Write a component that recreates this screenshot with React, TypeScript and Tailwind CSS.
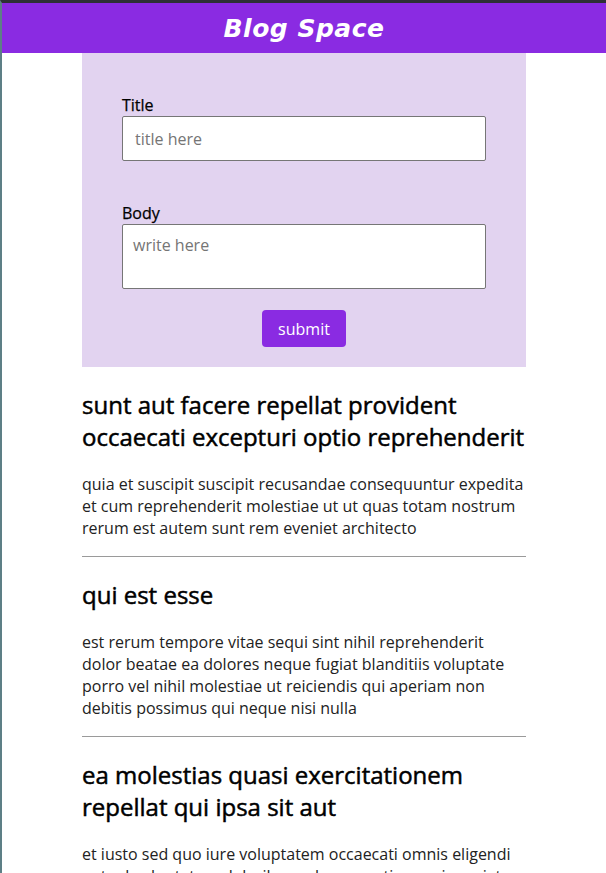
const posts = [
  {
    title: 'sunt aut facere repellat provident occaecati excepturi optio reprehenderit',
    body: 'quia et suscipit suscipit recusandae consequuntur expedita et cum reprehenderit molestiae ut ut quas totam nostrum rerum est autem sunt rem eveniet architecto',
  },
  {
    title: 'qui est esse',
    body: 'est rerum tempore vitae sequi sint nihil reprehenderit dolor beatae ea dolores neque fugiat blanditiis voluptate porro vel nihil molestiae ut reiciendis qui aperiam non debitis possimus qui neque nisi nulla',
  },
  {
    title: 'ea molestias quasi exercitationem repellat qui ipsa sit aut',
    body: 'et iusto sed quo iure voluptatem occaecati omnis eligendi aut ad voluptatem doloribus vel accusantium quis pariatur molestiae porro eius odio et labore et velit aut',
  },
];

export default function App() {
  return (
    <div className="min-h-[873px] bg-white border-t-[3px] border-l-2 border-t-[#2d3035] border-l-[#5d7f86] font-['Open_Sans',sans-serif] text-[#111]">
      {/* Header */}
      <header className="h-[50px] bg-[#8a2be2] flex items-center justify-center">
        <h1 className="text-white text-[25px] font-bold italic tracking-[0.5px] font-['DejaVu_Sans',sans-serif] mt-[1px]">
          Blog Space
        </h1>
      </header>

      <main className="w-[444px] mx-auto">
        {/* New post form */}
        <form className="bg-[#e2d3f0] px-10 pt-[41px] pb-5 flex flex-col" onSubmit={(e) => e.preventDefault()}>
          <label htmlFor="title" className="text-base leading-[22px] text-black [-webkit-text-stroke:0.25px_black]">Title</label>
          <input
            id="title"
            type="text"
            placeholder="title here"
            className="h-[45px] bg-white border border-[#767676] rounded-[2px] px-3 text-base placeholder:text-[#757575] outline-none"
          />
          <label htmlFor="body" className="mt-[41px] text-base leading-[22px] text-black [-webkit-text-stroke:0.25px_black]">Body</label>
          <textarea
            id="body"
            placeholder="write here"
            className="h-[65px] bg-white border border-[#767676] rounded-[2px] px-[10px] pt-[8px] text-base resize-none placeholder:text-[#757575] outline-none"
          />
          <button
            type="submit"
            className="mt-[21px] self-center w-[84px] h-[37px] bg-[#8a2be2] text-white text-base rounded-[4px]"
          >
            submit
          </button>
        </form>

        {/* Posts */}
        {posts.map((post, i) => (
          <article key={i}>
            <h2 className="mt-[22px] text-2xl leading-8 text-black [-webkit-text-stroke:0.5px_black]">{post.title}</h2>
            <p className="mt-5 text-base leading-[22px] text-[#222]">{post.body}</p>
            <hr className="mt-[17px] border-0 border-t border-[#9a9a9a]" />
          </article>
        ))}
      </main>
    </div>
  );
}
